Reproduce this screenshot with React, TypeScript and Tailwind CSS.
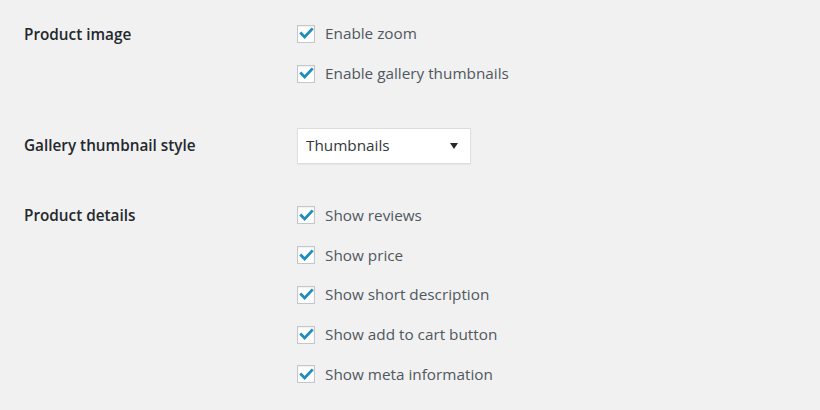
import React from "react";

type Section =
  | { label: string; kind: "checks"; items: string[] }
  | { label: string; kind: "select"; value: string };

const sections: Section[] = [
  { label: "Product image", kind: "checks", items: ["Enable zoom", "Enable gallery thumbnails"] },
  { label: "Gallery thumbnail style", kind: "select", value: "Thumbnails" },
  {
    label: "Product details",
    kind: "checks",
    items: [
      "Show reviews",
      "Show price",
      "Show short description",
      "Show add to cart button",
      "Show meta information",
    ],
  },
];

function Checkbox() {
  return (
    <span className="flex h-[18px] w-[18px] shrink-0 items-center justify-center border border-[#c3c6ca] bg-white shadow-[inset_0_1px_2px_rgba(0,0,0,0.07)]">
      <svg viewBox="0 0 16 16" className="h-[15px] w-[15px]">
        <path
          d="M2.4 8 L6 11.6 L13.6 3.6"
          fill="none"
          stroke="#1e8cbe"
          strokeWidth="3"
          strokeLinecap="square"
          strokeLinejoin="miter"
        />
      </svg>
    </span>
  );
}

export default function App() {
  return (
    <div className="h-[410px] w-[820px] overflow-hidden bg-[#f1f1f1] pl-6 pt-[14px] font-['Open_Sans',sans-serif] text-[15.3px]">
      <div className="flex flex-col">
        {sections.map((s, i) => (
          <div
            key={s.label}
            className={`flex ${i === 1 ? "mt-[34px]" : ""} ${i === 2 ? "mt-[32px]" : ""}`}
          >
            <div
              className={`w-[273px] shrink-0 font-semibold text-[#23282d] ${
                s.kind === "select" ? "flex h-9 items-center" : "flex h-10 items-center"
              }`}
            >
              {s.label}
            </div>
            {s.kind === "checks" ? (
              <div className="flex flex-col">
                {s.items.map((item) => (
                  <label key={item} className="flex h-[39.75px] items-center gap-[10px] text-[#50575e]">
                    <Checkbox />
                    <span>{item}</span>
                  </label>
                ))}
              </div>
            ) : (
              <div className="flex h-9 w-[174px] items-center justify-between border border-[#dddddd] bg-white pl-2 pr-3 text-[#32373c] shadow-[0_1px_1px_rgba(0,0,0,0.04)]">
                <span>{s.value}</span>
                <svg viewBox="0 0 8 8" className="h-[8px] w-[8px]">
                  <path d="M0 1 L8 1 L4 7 Z" fill="#23282d" />
                </svg>
              </div>
            )}
          </div>
        ))}
      </div>
    </div>
  );
}
